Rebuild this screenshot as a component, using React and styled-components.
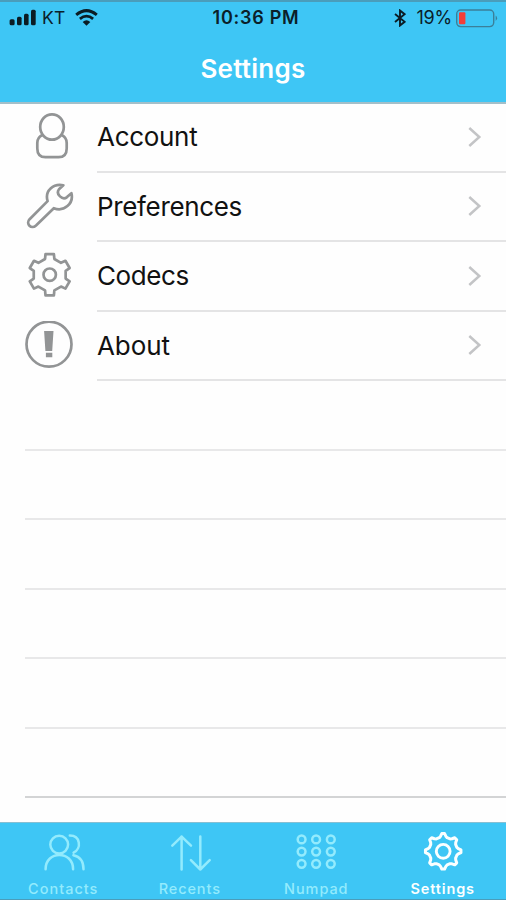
import React, { useState } from 'react';
import styled, { createGlobalStyle } from 'styled-components';

const GlobalStyle = createGlobalStyle`
  * {
    box-sizing: border-box;
  }

  body {
    margin: 0;
    background: #fefefe;
    font-family: Inter, 'Liberation Sans', sans-serif;
  }

  button {
    border: 0;
    padding: 0;
    background: none;
    font: inherit;
    color: inherit;
    cursor: pointer;
  }

  ul {
    margin: 0;
    padding: 0;
    list-style: none;
  }
`;

const Screen = styled.div`
  width: 506px;
  height: 900px;
  display: flex;
  flex-direction: column;
  overflow: hidden;
  background: #fefefe;
`;

const Header = styled.header`
  height: 104px;
  flex-shrink: 0;
  background: #3ec6f5;
  border-top: 2px solid #4a9dbb;
  border-bottom: 2px solid #a3bfc9;
`;

const StatusBar = styled.div`
  height: 32px;
  display: grid;
  grid-template-columns: 1fr auto 1fr;
  align-items: center;
  padding: 0 8px 0 9px;
  color: #0b2029;
  font-size: 17.5px;
  line-height: 32px;
`;

const StatusGroup = styled.div`
  display: flex;
  align-items: center;
  justify-content: ${({ $end }) => ($end ? 'flex-end' : 'flex-start')};

  svg {
    display: block;
    flex-shrink: 0;
  }
`;

const Carrier = styled.span`
  margin: 0 10px 0 6px;
  letter-spacing: 0.2px;
`;

const Clock = styled.time`
  padding-left: 5px;
  font-weight: 600;
  font-size: 18px;
  letter-spacing: 0.75px;
`;

const Percent = styled.span`
  margin: 0 4px 0 10px;
  font-size: 18px;
  letter-spacing: -0.2px;
`;

const Title = styled.h1`
  margin: 0;
  height: 66px;
  line-height: 69px;
  text-align: center;
  color: #fff;
  font-size: 26px;
  font-weight: 600;
  letter-spacing: 0.25px;
`;

const List = styled.ul`
  flex: 1;
  min-height: 0;
  margin-top: -1px;
`;

const Row = styled.li`
  height: 69.56px;
  display: flex;
  padding-left: 24px;
`;

const RowIcon = styled.svg`
  width: 50px;
  height: 50px;
  margin: 9.3px 23px 0 0;
  flex-shrink: 0;
  fill: none;
  stroke: #929495;
  stroke-width: 2.7;
  stroke-linejoin: round;
`;

const RowBody = styled.button`
  flex: 1;
  display: flex;
  justify-content: space-between;
  align-items: center;
  padding-right: 24px;
  border-bottom: 2px solid #e4e4e5;
  color: #111;
  font-size: 26px;
  letter-spacing: ${({ $spacing }) => $spacing || 0}px;
`;

const EmptyRow = styled.li`
  height: 69.56px;
  margin-left: 25px;
  border-bottom: 2px solid ${({ $last }) => ($last ? '#d3d4d5' : '#e8e8e9')};
`;

const TabBar = styled.nav`
  height: 78px;
  flex-shrink: 0;
  display: grid;
  grid-template-columns: repeat(4, 1fr);
  background: #3ec6f5;
  border-top: 1px solid #86bfd3;
  border-bottom: 1px solid #4a9dbb;
`;

const Tab = styled.button`
  display: flex;
  flex-direction: column;
  align-items: center;
  padding-top: 7px;
  color: ${({ $active }) => ($active ? '#fbffff' : '#93ebfd')};

  span {
    margin-top: 6px;
    font-size: 14.5px;
    line-height: 18px;
    font-weight: ${({ $active }) => ($active ? 600 : 500)};
    letter-spacing: ${({ $spacing }) => $spacing}px;
  }
`;

const TabIcon = styled.svg`
  width: 44px;
  height: 44px;
  flex-shrink: 0;
  fill: none;
  stroke: currentColor;
  stroke-width: 2.5;
  stroke-linecap: round;
  stroke-linejoin: round;
`;

// points are [radius, offset in degrees] for one tooth, repeated around the centre
const gearPath = (cx, cy, teeth, points) => {
  const all = [];
  for (let i = 0; i < teeth; i++) {
    points.forEach(([r, deg]) => {
      const a = ((i * 360) / teeth + deg - 90) * (Math.PI / 180);
      all.push(`${(cx + r * Math.cos(a)).toFixed(2)} ${(cy + r * Math.sin(a)).toFixed(2)}`);
    });
  }
  return `M${all.join('L')}Z`;
};

const CODEC_GEAR = gearPath(25.7, 23.7, 6, [
  [16.4, -16.5],
  [21, -11.5],
  [21, 11.5],
  [16.4, 16.5],
]);

const TAB_GEAR = gearPath(22.2, 21.3, 8, [
  [14.2, -16],
  [15.3, -10],
  [17.8, -4.5],
  [17.8, 4.5],
  [15.3, 10],
  [14.2, 16],
]);

const SignalIcon = () => (
  <svg width="27" height="18" viewBox="0 0 27 18" fill="#0b1c24">
    <rect x="0.6" y="10.3" width="5" height="6" rx="1.5" />
    <rect x="8" y="7.8" width="4.6" height="8.5" rx="1.5" />
    <rect x="15" y="4.8" width="4.6" height="11.5" rx="1.5" />
    <rect x="22" y="0.8" width="4.7" height="15.5" rx="1.5" />
  </svg>
);

const WifiIcon = () => (
  <svg width="23" height="18" viewBox="0 0 23 18" fill="none" stroke="#0b1c24">
    <path d="M1.2 5.8Q11.5-2.6 21.8 5.8" strokeWidth="3" />
    <path d="M4.9 9.8Q11.5 4.4 18.1 9.8" strokeWidth="2.8" />
    <path d="M11.5 16.8L7.7 12.9Q11.5 9.8 15.3 12.9Z" fill="#0b1c24" stroke="none" />
  </svg>
);

const BluetoothIcon = () => (
  <svg width="12" height="18" viewBox="0 0 12 18" fill="none" stroke="#0b1c24" strokeWidth="1.9">
    <path d="M1 5L10.6 12.8L6 16.5V1.5L10.6 5.2L1 13" />
  </svg>
);

const BatteryIcon = () => (
  <svg width="42" height="19" viewBox="0 0 42 19">
    <rect x="0.7" y="1" width="37" height="16.6" rx="4" fill="none" stroke="#3b7f99" strokeWidth="1.4" />
    <rect x="3" y="3.3" width="6.4" height="12" rx="1" fill="#f33d38" />
    <path d="M39.7 6.6Q42.5 9.2 39.7 12Z" fill="#3b7f99" />
  </svg>
);

const Chevron = () => (
  <svg width="15" height="22" viewBox="0 0 15 22" fill="none" stroke="#c3c4c6" strokeWidth="2.5">
    <path d="M2.3 2L12.3 11L2.3 20" />
  </svg>
);

const SETTINGS = [
  {
    name: 'Account',
    spacing: -0.3,
    icon: (
      <>
        <ellipse cx="28" cy="15" rx="11.8" ry="12.7" />
        <path d="M18.2 23Q13.3 25.5 13.3 31V36.5Q13.3 45.2 21.5 45.2H34.5Q42.7 45.2 42.7 36.5V31Q42.7 25.5 37.8 23" />
      </>
    ),
  },
  {
    name: 'Preferences',
    spacing: -0.35,
    icon: (
      <path d="M39.3 3.2C29.5 1.2 20.5 8.5 23.6 19.1L5.6 37.2C1.4 41.8 7.3 47.8 12 43.5L29.8 26.2C40 30.3 50 21.5 47.4 11.2L43 15.1C38.5 18.7 31.4 12.2 35 7.3Z" />
    ),
  },
  {
    name: 'Codecs',
    spacing: -0.4,
    icon: (
      <>
        <path d={CODEC_GEAR} />
        <circle cx="25.7" cy="23.7" r="6.2" />
      </>
    ),
  },
  {
    name: 'About',
    spacing: -0.1,
    icon: (
      <>
        <circle cx="25" cy="23.2" r="22.5" />
        <path d="M20.1 9.9H29.5L28.2 29.9H21.4ZM21.9 31.8H28.3V36.3H21.9Z" fill="#929495" stroke="none" />
      </>
    ),
  },
];

const TABS = [
  {
    name: 'Contacts',
    spacing: 1,
    icon: (
      <>
        <circle cx="18.2" cy="14.6" r="8.9" />
        <path d="M4.6 39.2C4.6 20.2 32.1 20.2 32.1 39.2" />
        <path d="M28.8 5.6C39.5 5.6 40.8 18.5 32.6 22.6M32.4 25.3C38.8 26.6 42.5 31.5 42.5 39.2" />
      </>
    ),
  },
  {
    name: 'Recents',
    spacing: 0.9,
    icon: (
      <path d="M13.6 39.5V6.6M4.3 15.7L13.6 6.6L23 15.7M32.3 6.6V39.5M22.9 30.2L32.3 39.5L41.7 30.2" />
    ),
  },
  {
    name: 'Numpad',
    spacing: 0.9,
    icon: [9.4, 21.6, 33.8].map((y) =>
      [7.6, 22.1, 36.8].map((x) => <circle key={`${x}-${y}`} cx={x} cy={y} r="3.9" />),
    ),
  },
  {
    name: 'Settings',
    spacing: 0.85,
    icon: (
      <>
        <path d={TAB_GEAR} strokeWidth="3" />
        <circle cx="22.2" cy="21.3" r="6.9" strokeWidth="2.9" />
      </>
    ),
  },
];

const EMPTY_ROWS = 6;

export default function App() {
  const [tab, setTab] = useState('Settings');

  return (
    <Screen>
      <GlobalStyle />
      <Header>
        <StatusBar>
          <StatusGroup>
            <SignalIcon />
            <Carrier>KT</Carrier>
            <WifiIcon />
          </StatusGroup>
          <Clock>10:36 PM</Clock>
          <StatusGroup $end>
            <BluetoothIcon />
            <Percent>19%</Percent>
            <BatteryIcon />
          </StatusGroup>
        </StatusBar>
        <Title>Settings</Title>
      </Header>

      <List>
        {SETTINGS.map(({ name, icon, spacing }) => (
          <Row key={name}>
            <RowIcon viewBox="0 0 50 50">{icon}</RowIcon>
            <RowBody type="button" $spacing={spacing}>
              {name}
              <Chevron />
            </RowBody>
          </Row>
        ))}
        {Array.from({ length: EMPTY_ROWS }, (_, i) => (
          <EmptyRow key={i} $last={i === EMPTY_ROWS - 1} />
        ))}
      </List>

      <TabBar>
        {TABS.map(({ name, icon, spacing }) => (
          <Tab
            key={name}
            type="button"
            $active={tab === name}
            $spacing={spacing}
            onClick={() => setTab(name)}
          >
            <TabIcon viewBox="0 0 44 44">{icon}</TabIcon>
            <span>{name}</span>
          </Tab>
        ))}
      </TabBar>
    </Screen>
  );
}
